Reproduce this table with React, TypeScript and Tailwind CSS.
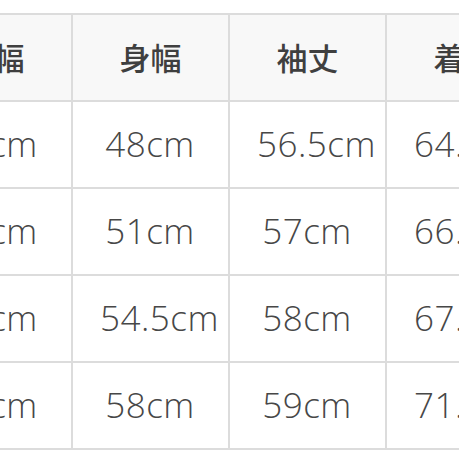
const headers = ['肩幅', '身幅', '袖丈', '着丈']

const rows = [
  ['44cm', '48cm', '56.5cm', '64.5cm'],
  ['46cm', '51cm', '57cm', '66.5cm'],
  ['49cm', '54.5cm', '58cm', '67.5cm'],
  ['52cm', '58cm', '59cm', '71.5cm'],
]

export default function App() {
  return (
    <div className="h-[459px] w-[459px] overflow-hidden bg-white">
      <div className="ml-[-86px] mt-[13px] grid w-max grid-cols-[155px_155px_155px_155px] gap-[2px] border-2 border-[#dcdcdc] bg-[#dcdcdc]">
        {headers.map((h) => (
          <div
            key={h}
            className="flex h-[85px] items-center bg-[#f8f8f8] px-[28px]"
          >
            <div className="w-full whitespace-nowrap text-center font-['Noto_Sans_CJK_JP',sans-serif] text-[31px] font-medium text-[#3f3f3f]">
              {h}
            </div>
          </div>
        ))}
        {rows.map((row, i) =>
          row.map((v, j) => (
            <div key={`${i}-${j}`} className="flex h-[85px] items-center bg-white pl-[27px] pr-[28px]">
              <div className="w-full whitespace-nowrap text-center font-['Open_Sans',sans-serif] text-[35px] font-light tracking-[0.5px] text-[#474747]">
                {v}
              </div>
            </div>
          ))
        )}
      </div>
    </div>
  )
}
